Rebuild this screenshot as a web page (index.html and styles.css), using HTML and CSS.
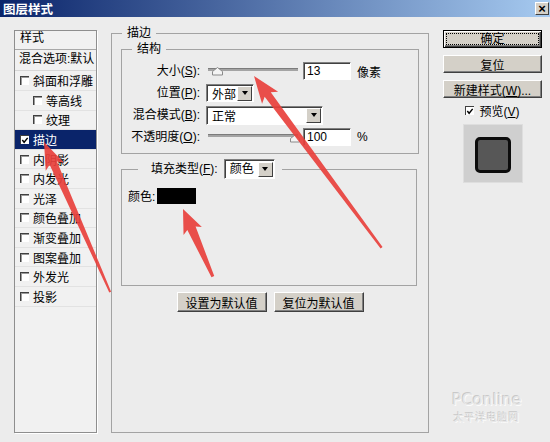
FILE: index.html
```html
<!DOCTYPE html>
<html lang="zh-CN">

<head>
    <meta charset="UTF-8">
    <meta name="viewport" content="width=device-width, initial-scale=1.0">
    <title>图层样式</title>
    <link rel="stylesheet" href="styles.css">
</head>

<body>

    <div class="titlebar">
        <span class="title">图层样式</span>
        <span class="close">×</span>
    </div>

    <div class="dialog-body">

        <!-- left: list of effects -->
        <div class="style-list">
            <div class="list-head">样式</div>
            <div class="list-blend">混合选项:默认</div>
            <div class="list-item"><span class="check"></span>斜面和浮雕</div>
            <div class="list-item sub"><span class="check"></span>等高线</div>
            <div class="list-item sub"><span class="check"></span>纹理</div>
            <div class="list-item selected">
                <span class="check checked"><svg width="9" height="9" viewBox="0 0 9 9"><polyline points="1.5,4 3.5,6.5 7.5,1.5" fill="none" stroke="#000" stroke-width="1.6"/></svg></span>描边
            </div>
            <div class="list-item"><span class="check"></span>内阴影</div>
            <div class="list-item"><span class="check"></span>内发光</div>
            <div class="list-item"><span class="check"></span>光泽</div>
            <div class="list-item"><span class="check"></span>颜色叠加</div>
            <div class="list-item"><span class="check"></span>渐变叠加</div>
            <div class="list-item"><span class="check"></span>图案叠加</div>
            <div class="list-item"><span class="check"></span>外发光</div>
            <div class="list-item"><span class="check"></span>投影</div>
        </div>

        <!-- middle: stroke settings -->
        <fieldset class="group stroke">
            <legend>描边</legend>

            <fieldset class="group structure">
                <legend>结构</legend>
                <div class="form-grid">
                    <label>大小(<u>S</u>):</label>
                    <div class="control">
                        <svg class="slider" width="90" height="18" viewBox="0 0 90 18">
                            <rect x="0" y="6" width="90" height="3" fill="#a4a4a4"/>
                            <rect x="0" y="6" width="90" height="1" fill="#7c7c7c"/>
                            <polygon points="4.5,13 4.5,9.5 9.5,5.5 14.5,9.5 14.5,13" fill="#f4f4f4" stroke="#8a8a8a"/>
                        </svg>
                        <span class="textbox">13</span>
                        <span class="unit">像素</span>
                    </div>

                    <label>位置(<u>P</u>):</label>
                    <div class="control">
                        <span class="select pos">外部<span class="drop"></span></span>
                    </div>

                    <label>混合模式(<u>B</u>):</label>
                    <div class="control">
                        <span class="select mode">正常<span class="drop"></span></span>
                    </div>

                    <label>不透明度(<u>O</u>):</label>
                    <div class="control">
                        <svg class="slider" width="90" height="18" viewBox="0 0 90 18">
                            <rect x="0" y="6" width="90" height="3" fill="#a4a4a4"/>
                            <rect x="0" y="6" width="90" height="1" fill="#7c7c7c"/>
                            <polygon points="82.5,14 82.5,10.5 87,7 91.5,10.5 91.5,14" fill="#f4f4f4" stroke="#8a8a8a"/>
                        </svg>
                        <span class="textbox">100</span>
                        <span class="unit">%</span>
                    </div>
                </div>
            </fieldset>

            <fieldset class="group fill">
                <legend>
                    <span class="fill-legend">
                        <span>填充类型(<u>F</u>):</span>
                        <span class="select kind">颜色<span class="drop"></span></span>
                    </span>
                </legend>
                <div class="color-row">
                    <span>颜色:</span>
                    <span class="swatch"></span>
                </div>
            </fieldset>

            <div class="default-buttons">
                <button class="btn">设置为默认值</button>
                <button class="btn">复位为默认值</button>
            </div>
        </fieldset>

        <!-- right: dialog actions -->
        <div class="actions">
            <button class="btn default"><span class="focus">确定</span></button>
            <button class="btn">复位</button>
            <button class="btn">新建样式(<u>W</u>)...</button>
            <div class="preview-check">
                <span class="check checked"><svg width="9" height="9" viewBox="0 0 9 9"><polyline points="1.5,4 3.5,6.5 7.5,1.5" fill="none" stroke="#000" stroke-width="1.6"/></svg></span>
                <span>预览(<u>V</u>)</span>
            </div>
            <div class="preview-box">
                <div class="preview-shape"></div>
            </div>
        </div>

    </div>

    <div class="watermark">
        <div class="wm-logo">PConline</div>
        <div class="wm-cn">太平洋电脑网</div>
    </div>

    <!-- red annotation arrows drawn on top of the screenshot -->
    <svg class="arrows" width="550" height="442" viewBox="0 0 550 442">
        <g fill="#e8403c" fill-opacity="0.92">
            <polygon transform="translate(254 76) rotate(53.4)"
                points="0,0 27,-10 23,-3.8 214,-1.2 214,1.2 23,3.8 27,10"/>
            <polygon transform="translate(44 142) rotate(66.2)"
                points="0,0 27,-10 23,-4 164,-1 164,1 23,4 27,10"/>
            <polygon transform="translate(183 209) rotate(66.2)"
                points="0,0 24,-10 21,-4.5 74,-1.5 74,1.5 21,4.5 24,10"/>
        </g>
    </svg>

</body>

</html>
```

FILE: styles.css
```css
* {
    box-sizing: border-box;
}

body {
    margin: 0;
    width: 550px;
    height: 442px;
    overflow: hidden;
    position: relative;
    font-family: "Liberation Sans", "Noto Sans CJK SC", sans-serif;
    font-size: 12px;
    color: #000;
    background: #ececec;
}

u {
    text-decoration: underline;
}

/* title bar */
.titlebar {
    height: 17px;
    display: flex;
    align-items: center;
    justify-content: space-between;
    padding: 0 1px 0 3px;
    background: linear-gradient(to right, #0a246a, #a6caf0);
    color: #fff;
    font-weight: bold;
    font-size: 12.5px;
}

.close {
    width: 14px;
    height: 13px;
    background: #d4d0c8;
    color: #000;
    font-size: 13px;
    line-height: 11px;
    text-align: center;
    border: 1px solid;
    border-color: #fff #404040 #404040 #fff;
}

.dialog-body {
    display: flex;
    align-items: flex-start;
    padding: 9px 0 0 14px;
}

/* effect list */
.style-list {
    width: 83px;
    height: 403px;
    margin-top: 4px;
    background: #f1f1f1;
    border: 1px solid #8e8e8e;
    box-shadow: 1px 1px 0 #fff;
}

.list-head {
    height: 19px;
    padding-left: 5px;
    line-height: 15px;
    border-bottom: 1px solid #a8a8a8;
}

.list-blend {
    height: 21.4px;
    padding-left: 4px;
    line-height: 18px;
    white-space: nowrap;
    border-bottom: 1px solid #d6d6d6;
}

.list-item {
    height: 19.6px;
    display: flex;
    align-items: center;
    gap: 4px;
    padding-left: 5px;
    border-bottom: 1px solid #e2e2e2;
}

.list-item.sub {
    padding-left: 18px;
}

.list-item.selected {
    background: #0a246a;
    color: #fff;
}

.check {
    width: 9px;
    height: 9px;
    flex: none;
    background: #fff;
    border-top: 1px solid #404040;
    border-left: 1px solid #404040;
    box-shadow: inset 1px 1px 0 #9a9a9a;
    display: flex;
}

.check.checked {
    box-shadow: none;
}

/* group boxes */
.group {
    margin: 0;
    padding: 0;
    min-width: 0;
    border: 1px solid #a3a3a3;
}

.group legend {
    padding: 0 5px;
    line-height: 14px;
}

.stroke {
    width: 318px;
    margin-left: 14px;
    padding-bottom: 120px;
}

.stroke > legend {
    margin-left: 10px;
}

.structure {
    margin: 2px 9px 0 9px;
    padding: 6px 0 7px 0;
}

.structure > legend {
    margin-left: 10px;
}

.form-grid {
    display: grid;
    grid-template-columns: 78px 1fr;
    grid-auto-rows: 18px;
    column-gap: 6px;
    row-gap: 4px;
}

.form-grid label {
    text-align: right;
    line-height: 18px;
    white-space: nowrap;
}

.control {
    display: flex;
    align-items: center;
}

.slider {
    margin: 0 5px 0 2px;
    overflow: visible;
}

.textbox {
    width: 48px;
    height: 18px;
    padding-left: 3px;
    line-height: 16px;
    background: #fff;
    border: 1px solid;
    border-color: #808080 #fff #fff #808080;
    box-shadow: inset 1px 1px 0 #404040;
}

.unit {
    margin-left: 6px;
}

.select {
    height: 19px;
    display: flex;
    align-items: center;
    justify-content: space-between;
    padding: 0 1px 0 5px;
    background: #fff;
    border: 1px solid;
    border-color: #808080 #fff #fff #808080;
    box-shadow: inset 1px 1px 0 #404040;
}

.select.pos {
    width: 48px;
    height: 18px;
}

.select.mode {
    width: 117px;
}

.select.kind {
    width: 51px;
    height: 20px;
}

.drop {
    width: 15px;
    height: 15px;
    background: #d4d0c8;
    border: 1px solid;
    border-color: #fff #404040 #404040 #fff;
    display: flex;
    align-items: center;
    justify-content: center;
}

.drop::after {
    content: "";
    border-left: 3.5px solid transparent;
    border-right: 3.5px solid transparent;
    border-top: 4px solid #000;
}

.fill {
    margin: 5px 11px 0 9px;
    padding: 9px 6px 82px 6px;
}

.fill > legend {
    margin-left: 10px;
    padding: 0 7px 0 13px;
    line-height: 20px;
}

.fill-legend {
    display: flex;
    align-items: center;
    gap: 6px;
}

.color-row {
    display: flex;
    align-items: center;
    gap: 2px;
    height: 15px;
}

.swatch {
    width: 39px;
    height: 16px;
    background: #000;
}

.default-buttons {
    display: flex;
    justify-content: center;
    gap: 7px;
    margin-top: 6px;
}

/* classic buttons */
.btn {
    height: 20px;
    width: 90px;
    padding: 0;
    font: inherit;
    color: #000;
    background: #d4d0c8;
    border: 1px solid;
    border-color: #fff #404040 #404040 #fff;
    box-shadow: inset -1px -1px 0 #808080;
}

.actions {
    width: 99px;
    margin: 4px 0 0 14px;
    display: flex;
    flex-direction: column;
    align-items: center;
}

.actions .btn {
    width: 99px;
    height: 18px;
    margin-bottom: 7px;
}

.btn.default {
    border: 1px solid #000;
    box-shadow: inset 1px 1px 0 #fff, inset -1px -1px 0 #404040, inset -2px -2px 0 #808080;
    padding: 3px;
}

.focus {
    display: block;
    height: 100%;
    line-height: 10px;
    outline: 1px dotted #000;
}

.preview-check {
    display: flex;
    align-items: center;
    gap: 5px;
    height: 12px;
    margin-top: -1px;
}

.preview-box {
    width: 60px;
    height: 59px;
    margin-top: 8px;
    background: #cfcfcf;
    border: 1px solid #dedede;
    display: flex;
    align-items: center;
    justify-content: center;
}

.preview-shape {
    width: 36px;
    height: 36px;
    margin-top: 2px;
    border: 3px solid #0c0c0c;
    border-radius: 5px;
    background: #575757;
}

/* watermark and annotations */
.watermark {
    position: absolute;
    left: 452px;
    top: 392px;
    color: #e6e6e6;
    text-shadow: -1px -1px 0 #c9c9c9, 1px 1px 0 #fbfbfb;
    text-align: center;
}

.wm-logo {
    font-family: "DejaVu Sans", sans-serif;
    font-size: 16px;
    line-height: 16px;
}

.wm-cn {
    margin-top: 3px;
    font-family: "Noto Sans CJK SC", sans-serif;
    font-size: 10px;
    line-height: 11px;
    letter-spacing: 1px;
}

.arrows {
    position: absolute;
    left: 0;
    top: 0;
    pointer-events: none;
}
```
